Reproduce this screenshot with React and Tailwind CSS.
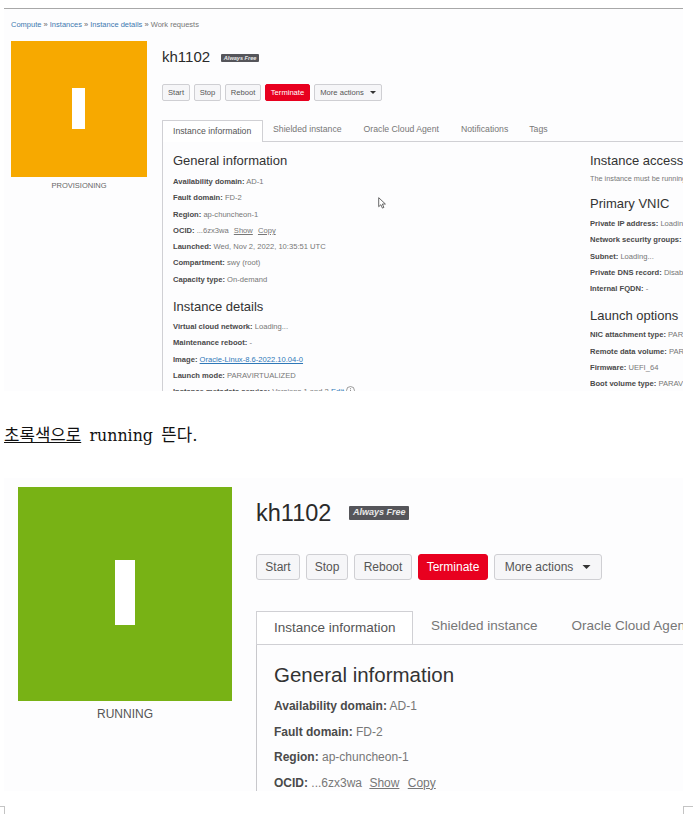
const font = { fontFamily: '"Liberation Sans", Arial, sans-serif' };

function Row({ label, children, cls }) {
  return (
    <div className={cls}>
      <b className="font-bold text-[#4a4a4a]">{label}</b> {children}
    </div>
  );
}

function Rows({ items, cls }) {
  return items.map(([l, v]) => <Row key={l} label={l} cls={cls}>{v}</Row>);
}

const smallRow = "h-[16.3px] leading-[16.3px] text-[7.6px] text-[#777] whitespace-nowrap";
const bigRow = "h-[25.6px] leading-[25.6px] text-[12px] text-[#777] whitespace-nowrap";

function SmallBtn({ children, w, red }) {
  return (
    <div className={`h-[17px] flex items-center justify-center rounded-[2px] border text-[7.6px] ${w} ${red ? "bg-[#e8001f] border-[#e8001f] text-white" : "bg-[#f6f6f8] border-[#cfcfd3] text-[#555]"}`}>
      {children}
    </div>
  );
}

function BigBtn({ children, w, red }) {
  return (
    <div className={`h-[26px] flex items-center justify-center rounded-[3px] border text-[12px] ${w} ${red ? "bg-[#e8001f] border-[#e8001f] text-white" : "bg-[#f6f6f8] border-[#cfcfd3] text-[#555]"}`}>
      {children}
    </div>
  );
}

function Caret({ cls }) {
  return (
    <svg viewBox="0 0 10 5" className={cls}>
      <path d="M0 0h10L5 5z" fill="#333" />
    </svg>
  );
}

function TopPanel() {
  return (
    <section className="relative ml-1 mt-2 h-[383px] w-[679px] overflow-hidden border-t border-[#a8a8a8] bg-[#fdfdfe]">
      <nav className="ml-[7px] mt-[10px] h-[11px] text-[7.5px] leading-[11px] text-[#3d78b0]">
        Compute <span className="text-[#666]">»</span> Instances <span className="text-[#666]">»</span> Instance details <span className="text-[#666]">»</span> <span className="text-[#777]">Work requests</span>
      </nav>
      <div className="mt-[11px] flex pl-[7px]">
        <div className="w-[136px] shrink-0">
          <div className="flex h-[136px] items-center justify-center bg-[#f7a900] pb-[2px] pr-[2px]">
            <div className="h-[41px] w-[13px] bg-white" />
          </div>
          <div className="mt-[4px] text-center text-[7.5px] leading-[10px] text-[#666]">PROVISIONING</div>
        </div>
        <div className="ml-[15px] min-w-0 flex-1">
          <div className="mt-[6px] flex h-[20px] items-center">
            <h1 className="text-[15px] leading-[20px] text-[#2a2a2a]">kh1102</h1>
            <span className="ml-[11px] mt-[2px] flex h-[8px] w-[38px] items-center justify-center rounded-[1px] bg-[#55555a] text-[5.6px] italic font-bold text-[#e8e8e8]">Always Free</span>
          </div>
          <div className="mt-[17px] flex gap-[4px]">
            <SmallBtn w="w-[28px]">Start</SmallBtn>
            <SmallBtn w="w-[27px]">Stop</SmallBtn>
            <SmallBtn w="w-[36px]">Reboot</SmallBtn>
            <SmallBtn w="w-[45px]" red>Terminate</SmallBtn>
            <SmallBtn w="w-[68px]">More actions<Caret cls="ml-[6px] w-[6px] h-[3px]" /></SmallBtn>
          </div>
          <div className="mt-[19px] flex h-[22px] border-b border-[#d0d0d4] text-[8.7px] text-[#777]">
            <div className="flex h-[22px] w-[101px] items-center rounded-t-[1px] border border-b-0 border-[#d0d0d4] bg-white pl-[10px] text-[#555]">Instance information</div>
            <div className="ml-[10px] flex h-[20px] items-center">Shielded instance</div>
            <div className="ml-[22px] flex h-[20px] items-center">Oracle Cloud Agent</div>
            <div className="ml-[22px] flex h-[20px] items-center">Notifications</div>
            <div className="ml-[21px] flex h-[20px] items-center">Tags</div>
          </div>
          <div className="flex border-l border-[#d0d0d4] pl-[10px]">
            <div className="w-[417px] shrink-0">
              <h2 className="mt-[11px] h-[16px] text-[13px] leading-[16px] text-[#333]">General information</h2>
              <div className="mt-[5px]">
                <Rows cls={smallRow} items={[
                  ["Availability domain:", "AD-1"],
                  ["Fault domain:", "FD-2"],
                  ["Region:", "ap-chuncheon-1"],
                ]} />
                <Row label="OCID:" cls={smallRow}>...6zx3wa <span className="ml-[3px] underline">Show</span> <span className="ml-[3px] underline">Copy</span></Row>
                <Rows cls={smallRow} items={[
                  ["Launched:", "Wed, Nov 2, 2022, 10:35:51 UTC"],
                  ["Compartment:", "swy (root)"],
                  ["Capacity type:", "On-demand"],
                ]} />
              </div>
              <h2 className="mt-[11px] h-[16px] text-[13px] leading-[16px] text-[#333]">Instance details</h2>
              <div className="mt-[4px]">
                <Row label="Virtual cloud network:" cls={smallRow}>Loading...</Row>
                <Row label="Maintenance reboot:" cls={smallRow}>-</Row>
                <Row label="Image:" cls={smallRow}><span className="text-[#2f78b8] underline">Oracle-Linux-8.6-2022.10.04-0</span></Row>
                <Row label="Launch mode:" cls={smallRow}>PARAVIRTUALIZED</Row>
                <Row label="Instance metadata service:" cls={smallRow}>
                  Versions 1 and 2 <span className="text-[#2f78b8]">Edit</span>
                  <svg viewBox="0 0 10 10" className="ml-[2px] inline-block h-[9px] w-[9px] align-[-1px]">
                    <circle cx="5" cy="5" r="4.4" fill="none" stroke="#777" strokeWidth=".8" />
                    <path d="M5 4.2v3.2M5 2.4v1" stroke="#777" strokeWidth=".9" />
                  </svg>
                </Row>
              </div>
            </div>
            <div className="min-w-0 flex-1 overflow-hidden">
              <h2 className="mt-[11px] h-[16px] whitespace-nowrap text-[13px] leading-[16px] text-[#333]">Instance access</h2>
              <div className="mt-[5px] text-[7.3px] leading-[10px] text-[#777] whitespace-nowrap">The instance must be running</div>
              <h2 className="mt-[12px] h-[16px] text-[13px] leading-[16px] text-[#333]">Primary VNIC</h2>
              <div className="mt-[4px]">
                <Rows cls={smallRow} items={[
                  ["Private IP address:", "Loading..."],
                  ["Network security groups:", "None"],
                  ["Subnet:", "Loading..."],
                  ["Private DNS record:", "Disabled"],
                  ["Internal FQDN:", "-"],
                ]} />
              </div>
              <h2 className="mt-[11px] h-[16px] text-[13px] leading-[16px] text-[#333]">Launch options</h2>
              <div className="mt-[3px]">
                <Rows cls={smallRow} items={[
                  ["NIC attachment type:", "PARAVIRTUALIZED"],
                  ["Remote data volume:", "PARAVIRTUALIZED"],
                  ["Firmware:", "UEFI_64"],
                  ["Boot volume type:", "PARAVIRTUALIZED"],
                ]} />
              </div>
            </div>
          </div>
        </div>
      </div>
      <svg viewBox="0 0 8 12" className="absolute left-[374px] top-[188px] h-[12px] w-[8px]">
        <path d="M.7.7v9l2.2-2 1.5 3.4 1.5-.7L4.4 7h3z" fill="#fff" stroke="#444" strokeWidth=".8" />
      </svg>
    </section>
  );
}

function BottomPanel() {
  return (
    <section className="ml-1 h-[313px] w-[679px] overflow-hidden bg-[#fdfdfe]">
      <div className="flex pl-[14px] pt-[9px]">
        <div className="w-[214px] shrink-0">
          <div className="flex h-[214px] items-center justify-center bg-[#78b215] pb-[3px]">
            <div className="h-[65px] w-[20px] bg-white" />
          </div>
          <div className="mt-[6px] text-center text-[12px] leading-[15px] text-[#555]">RUNNING</div>
        </div>
        <div className="ml-[24px] min-w-0 flex-1">
          <div className="mt-[11px] flex h-[30px] items-center">
            <h1 className="text-[23.5px] leading-[30px] text-[#2a2a2a]">kh1102</h1>
            <span className="ml-[18px] flex h-[14px] w-[60px] items-center justify-center rounded-[1px] bg-[#55555a] text-[9px] italic font-bold text-[#e8e8e8]">Always Free</span>
          </div>
          <div className="mt-[26px] flex gap-[6px]">
            <BigBtn w="w-[44px]">Start</BigBtn>
            <BigBtn w="w-[42px]">Stop</BigBtn>
            <BigBtn w="w-[58px]">Reboot</BigBtn>
            <BigBtn w="w-[70px]" red>Terminate</BigBtn>
            <BigBtn w="w-[108px]">More actions<Caret cls="ml-[9px] w-[9px] h-[4px]" /></BigBtn>
          </div>
          <div className="mt-[31px] flex h-[34px] overflow-hidden border-b border-[#d0d0d4] text-[13.5px] whitespace-nowrap text-[#777]">
            <div className="flex h-[34px] w-[157px] shrink-0 items-center border border-b-0 border-[#d0d0d4] bg-white pl-[17px] text-[#555]">Instance information</div>
            <div className="ml-[18px] flex h-[31px] shrink-0 items-center">Shielded instance</div>
            <div className="ml-[34px] flex h-[31px] shrink-0 items-center">Oracle Cloud Agent</div>
          </div>
          <div className="h-[160px] border-l border-[#c8c8cc] pl-[17px] pt-[17px]">
            <h2 className="h-[26px] text-[20.5px] leading-[26px] text-[#333]">General information</h2>
            <div className="mt-[6px]">
              <Rows cls={bigRow} items={[
                ["Availability domain:", "AD-1"],
                ["Fault domain:", "FD-2"],
                ["Region:", "ap-chuncheon-1"],
              ]} />
              <Row label="OCID:" cls={bigRow}>...6zx3wa <span className="ml-[4px] underline">Show</span> <span className="ml-[5px] underline">Copy</span></Row>
            </div>
          </div>
        </div>
      </div>
    </section>
  );
}

export default function App() {
  return (
    <main className="relative h-[814px] w-[693px] overflow-hidden bg-white" style={font}>
      <TopPanel />
      <p className="ml-1 mt-[34px] h-[20px] text-[16.8px] leading-[20px] text-[#111] whitespace-nowrap" style={{ fontFamily: '"DejaVu Serif", "Noto Sans CJK KR", serif' }}>
        <span className="underline">초록색으로</span> <span className="ml-[3px] text-[15.8px]">running</span> <span className="ml-[3px]">뜬다.</span>
      </p>
      <div className="mt-[33px]"><BottomPanel /></div>
      <div className="absolute bottom-0 left-0 h-[8px] w-[5px] border-r border-t border-[#c4c4c4]" />
      <div className="absolute bottom-0 right-0 h-[8px] w-[10px] border-l border-t border-[#c4c4c4]" />
    </main>
  );
}
